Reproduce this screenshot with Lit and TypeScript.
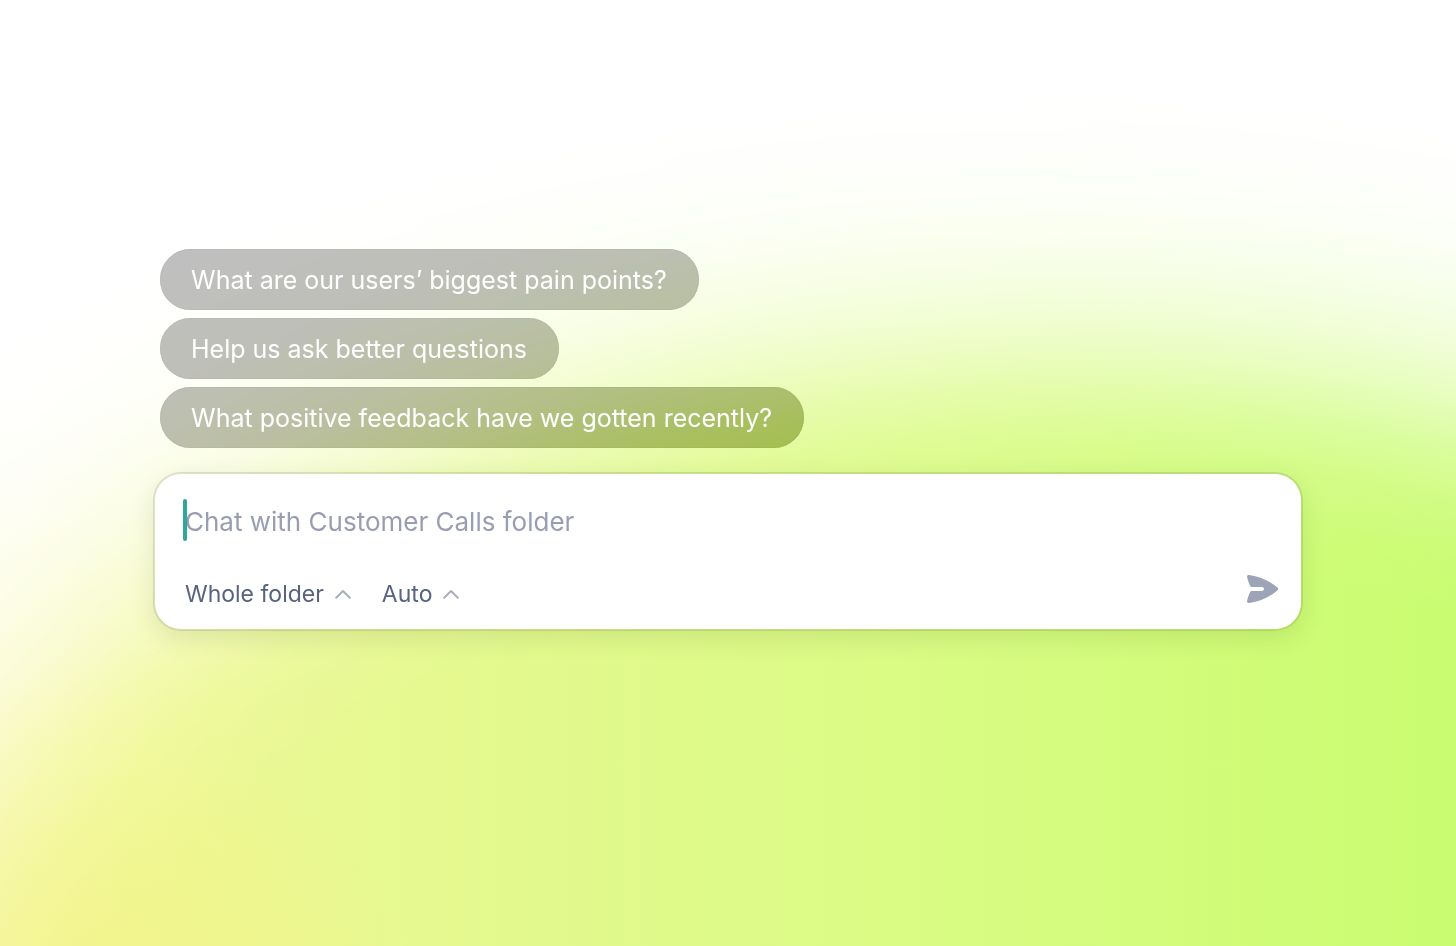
import { LitElement, html, css } from "lit";
import { customElement, state } from "lit/decorators.js";

const chevron = html`<svg class="chevron" viewBox="0 0 16 10" aria-hidden="true">
  <path d="M1.200 8.800 8 2l6.800 6.800" fill="none" stroke="currentColor" stroke-width="2" stroke-linecap="round" stroke-linejoin="round" />
</svg>`;

@customElement("app-root")
export class AppRoot extends LitElement {
  static styles = css`
    :host {
      display: block;
      min-height: 100vh;
      position: relative;
      isolation: isolate;
      background: #fff;
      font-family: Inter, "Noto Sans", sans-serif;
    }
    .glow {
      position: absolute;
      inset: 0;
      z-index: -1;
      background:
        radial-gradient(ellipse 20% 26% at 9% 106%, rgba(243, 243, 138, 0.9) 0%, rgba(243, 243, 138, 0) 100%),
        linear-gradient(90deg, #f5f698 0%, #eff892 10%, #e9f892 20%, #e3f98e 35%, #dafb84 62%, #c9fc70 100%);
      mask-image:
        radial-gradient(
          ellipse 30% 42% at 14% 110%,
          rgba(0, 0, 0, 0.95) 0%,
          rgba(0, 0, 0, 0.65) 40%,
          rgba(0, 0, 0, 0.25) 70%,
          transparent 100%
        ),
        radial-gradient(
          ellipse 108% 106% at 70% 116%,
          #000 0%, #000 55%,
          rgba(0, 0, 0, 0.96) 60%,
          rgba(0, 0, 0, 0.87) 65%,
          rgba(0, 0, 0, 0.69) 70%,
          rgba(0, 0, 0, 0.46) 75%,
          rgba(0, 0, 0, 0.27) 80%,
          rgba(0, 0, 0, 0.14) 85%,
          rgba(0, 0, 0, 0.06) 90%,
          rgba(0, 0, 0, 0.02) 95%,
          transparent 100%
        );
    }
    main {
      box-sizing: border-box;
      padding: 249px 153px 64px;
      display: flex;
      flex-direction: column;
      gap: 24px;
    }
    .suggestions {
      list-style: none;
      margin: 0;
      padding: 0 7px;
      display: flex;
      flex-direction: column;
      align-items: flex-start;
      gap: 8px;
    }
    .suggestions li { display: flex; }
    button, input, select {
      font: inherit;
      border: 0;
      margin: 0;
      padding: 0;
      background: none;
      outline: none;
    }
    button, select { cursor: pointer; }
    .pill {
      box-sizing: border-box;
      padding: 16px 32px 15px 31px;
      border-radius: 31px;
      background: rgba(0, 0, 0, 0.25);
      backdrop-filter: saturate(160%);
      box-shadow: inset 0 0 1px rgba(0, 0, 0, 0.3);
      color: #fff;
      font-size: 25px;
      line-height: 30px;
      text-align: left;
    }
    .composer {
      display: flex;
      flex-direction: column;
      gap: 30px;
      padding: 24px 22px 19px 30px;
      border: 2px solid rgba(60, 70, 30, 0.14);
      border-radius: 28px;
      background: #fff;
      background-clip: padding-box;
      box-shadow: 0 8px 24px rgba(40, 60, 0, 0.1);
    }
    .field {
      display: flex;
      position: relative;
    }
    .caret {
      position: absolute;
      left: -2px;
      top: 1px;
      width: 4px;
      height: 42px;
      border-radius: 2px;
      background: #2fa79b;
    }
    .prompt {
      flex: 1;
      min-width: 0;
      height: 46px;
      font-size: 26px;
      color: #4b5675;
      caret-color: transparent;
    }
    .prompt::placeholder { color: #989db1; opacity: 1; }
    .toolbar {
      display: flex;
      align-items: flex-start;
      gap: 31px;
    }
    .choice {
      display: flex;
      align-items: center;
      gap: 11px;
      padding-top: 4px;
      color: #abaebd;
    }
    .choice select {
      appearance: none;
      field-sizing: content;
      color: #59637f;
      font-size: 23px;
      line-height: 32px;
    }
    .chevron { width: 16px; height: 10px; display: block; }
    .send {
      margin-left: auto;
      color: #9da4b7;
      display: flex;
    }
    .send svg { width: 33px; height: 30px; display: block; }
  `;

  @state() private text = "";

  private suggestions = [
    "What are our users’ biggest pain points?",
    "Help us ask better questions",
    "What positive feedback have we gotten recently?",
  ];

  render() {
    return html`
      <div class="glow"></div>
      <main>
        <ul class="suggestions">
          ${this.suggestions.map(
            (s) => html`<li><button class="pill" type="button" @click=${() => (this.text = s)}>${s}</button></li>`
          )}
        </ul>
        <form class="composer" @submit=${(e: Event) => e.preventDefault()}>
          <div class="field">
            <input
              class="prompt"
              type="text"
              aria-label="Message"
              placeholder="Chat with Customer Calls folder"
              .value=${this.text}
              @input=${(e: Event) => (this.text = (e.target as HTMLInputElement).value)}
            />
            ${this.text ? "" : html`<span class="caret"></span>`}
          </div>
          <div class="toolbar">
            <label class="choice">
              <select aria-label="Scope"><option>Whole folder</option></select>
              ${chevron}
            </label>
            <label class="choice">
              <select aria-label="Model"><option>Auto</option></select>
              ${chevron}
            </label>
            <button class="send" type="submit" aria-label="Send">
              <svg viewBox="0 0 33 30" aria-hidden="true">
                <path fill="currentColor" d="M1 2.600C1 1.400 2 .7 3.200 1C14 2.500 24 7 31.500 13.600C32.300 14.400 32.300 15.400 31.500 16.200C24 23 14 27.500 3.200 29C2 29.200 1 28.500 1 27.300C1.600 23.800 2.800 20.600 4.500 17.600C4.900 17 5.300 16.900 6 16.900H15.800C17.200 16.900 18 16 18 15C18 14 17.200 13.100 15.800 13.100H6C5.300 13.100 4.900 13 4.500 12.400C2.800 9.400 1.600 6.100 1 2.600Z" />
              </svg>
            </button>
          </div>
        </form>
      </main>
    `;
  }
}
